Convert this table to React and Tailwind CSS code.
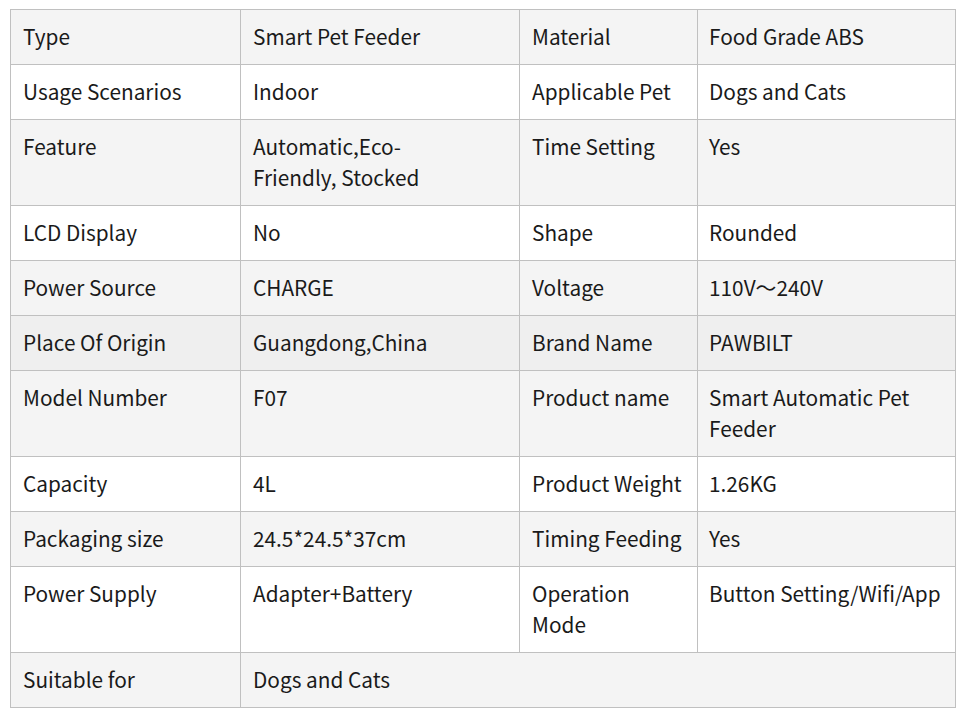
import React from "react";

const rows = [
  ["Type", "Smart Pet Feeder", "Material", "Food Grade ABS"],
  ["Usage Scenarios", "Indoor", "Applicable Pet", "Dogs and Cats"],
  ["Feature", "Automatic,Eco-Friendly, Stocked", "Time Setting", "Yes"],
  ["LCD Display", "No", "Shape", "Rounded"],
  ["Power Source", "CHARGE", "Voltage", "110V～240V"],
  ["Place Of Origin", "Guangdong,China", "Brand Name", "PAWBILT"],
  ["Model Number", "F07", "Product name", "Smart Automatic Pet Feeder"],
  ["Capacity", "4L", "Product Weight", "1.26KG"],
  ["Packaging size", "24.5*24.5*37cm", "Timing Feeding", "Yes"],
  ["Power Supply", "Adapter+Battery", "Operation Mode", "Button Setting/Wifi/App"],
];

const bgFor = (i) => {
  if (i === 5) return "bg-[#efefef]";
  return i % 2 === 0 ? "bg-[#f4f4f4]" : "bg-white";
};

const td = "border border-[#c0c0c0] pt-[11px] pb-[12px] align-top leading-[31px] break-words";
const pad = ["px-[12px]", "pl-[12px] pr-[40px]", "px-[12px]", "pl-[11px] pr-[4px]"];

export default function App() {
  return (
    <div
      className="bg-white min-h-[719px] pt-[9px] pl-[10px] text-[20.8px] text-[#1a1a1a]"
      style={{ fontFamily: '"Noto Sans CJK SC", "Noto Sans", sans-serif' }}
    >
      <table className="table-fixed border-collapse w-[945px]">
        <colgroup>
          <col className="w-[230px]" />
          <col className="w-[279px]" />
          <col className="w-[178px]" />
          <col className="w-[258px]" />
        </colgroup>
        <tbody>
          {rows.map((r, i) => (
            <tr key={i} className={bgFor(i)}>
              {r.map((c, j) => (
                <td key={j} className={td + " " + pad[j]}>
                  {c}
                </td>
              ))}
            </tr>
          ))}
          <tr className="bg-[#f4f4f4]">
            <td className={td + " px-[12px]"}>Suitable for</td>
            <td className={td + " px-[12px]"} colSpan={3}>
              Dogs and Cats
            </td>
          </tr>
        </tbody>
      </table>
    </div>
  );
}
